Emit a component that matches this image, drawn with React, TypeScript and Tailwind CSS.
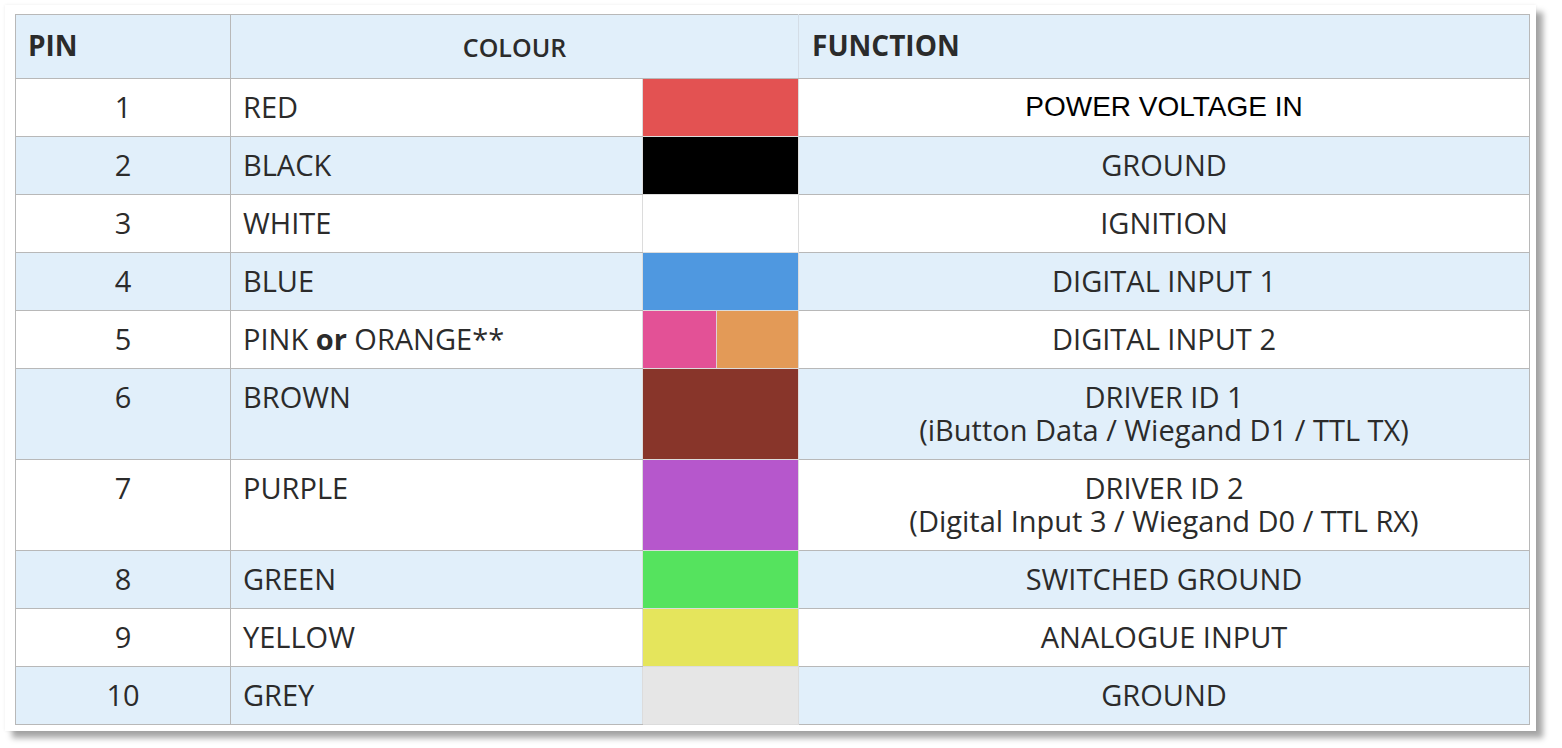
type Row = {
  pin: string;
  name: React.ReactNode;
  swatch: string[];
  fn: React.ReactNode;
  tall?: boolean;
  plain?: boolean;
};

const rows: Row[] = [
  { pin: '1', name: 'RED', swatch: ['#e35252'], fn: 'POWER VOLTAGE IN', plain: true },
  { pin: '2', name: 'BLACK', swatch: ['#000000'], fn: 'GROUND' },
  { pin: '3', name: 'WHITE', swatch: ['#ffffff'], fn: 'IGNITION' },
  { pin: '4', name: 'BLUE', swatch: ['#4f98e0'], fn: 'DIGITAL INPUT 1' },
  {
    pin: '5',
    name: (
      <>
        PINK <b className="font-bold">or</b> ORANGE**
      </>
    ),
    swatch: ['#e35196', '#e39a57'],
    fn: 'DIGITAL INPUT 2',
  },
  {
    pin: '6',
    name: 'BROWN',
    swatch: ['#88352a'],
    fn: (
      <>
        <div>DRIVER ID 1</div>
        <div>(iButton Data / Wiegand D1 / TTL TX)</div>
      </>
    ),
    tall: true,
  },
  {
    pin: '7',
    name: 'PURPLE',
    swatch: ['#b657cc'],
    fn: (
      <>
        <div>DRIVER ID 2</div>
        <div>(Digital Input 3 / Wiegand D0 / TTL RX)</div>
      </>
    ),
    tall: true,
  },
  { pin: '8', name: 'GREEN', swatch: ['#55e35e'], fn: 'SWITCHED GROUND' },
  { pin: '9', name: 'YELLOW', swatch: ['#e5e55c'], fn: 'ANALOGUE INPUT' },
  { pin: '10', name: 'GREY', swatch: ['#e6e6e6'], fn: 'GROUND' },
];

export default function App() {
  return (
    <div className="w-[1562px] h-[748px] bg-white pl-[5px] pt-[5px]">
      <div className="w-[1531px] bg-white pl-[10px] pt-[9px] pr-[7px] pb-[6px] shadow-[0_0_3px_rgba(0,0,0,0.08),7px_7px_6px_rgba(0,0,0,0.35)]">
        <table
          className="table-fixed border-collapse w-[1514px] text-[#2b2b2b] text-[29px] leading-[33px]"
          style={{ fontFamily: '"Open Sans", "Liberation Sans", sans-serif' }}
        >
          <colgroup>
            <col className="w-[215px]" />
            <col className="w-[412px]" />
            <col className="w-[156px]" />
            <col className="w-[731px]" />
          </colgroup>
          <thead>
            <tr className="h-[64px] bg-[#e1effa]">
              <th className="border border-[#b8b8b8] text-left pl-[12px] font-bold text-[28px] align-middle pb-[3px]">PIN</th>
              <th colSpan={2} className="border border-[#b8b8b8] border-r-[#d4dde6] text-center font-semibold text-[25px] align-middle pt-[2px]">
                COLOUR
              </th>
              <th className="border border-[#b8b8b8] border-l-[#d4dde6] text-left pl-[13px] font-bold text-[28px] align-middle pb-[3px]">FUNCTION</th>
            </tr>
          </thead>
          <tbody>
            {rows.map((r, i) => (
              <tr key={r.pin} className={`${r.tall ? 'h-[91px]' : 'h-[58px]'} ${i % 2 === 1 ? 'bg-[#e1effa]' : 'bg-white'}`}>
                <td className="border border-[#b8b8b8] text-center align-top pt-[11px] pb-[13px]">{r.pin}</td>
                <td className="border border-[#b8b8b8] border-r-[#dcdcdc] pl-[12px] align-top pt-[11px] pb-[13px] whitespace-nowrap">{r.name}</td>
                <td className="border border-[#dcdcdc] p-0 align-top">
                  <div className={`flex w-full ${r.tall ? 'h-[90px]' : 'h-[57px]'}`}>
                    {r.swatch.map((c, j) => (
                      <div
                        key={c}
                        className={j === 0 && r.swatch.length > 1 ? 'w-[74px] border-r border-[#e0d0d8]' : 'flex-1'}
                        style={{ backgroundColor: c }}
                      />
                    ))}
                  </div>
                </td>
                <td
                  className={`border border-[#b8b8b8] border-l-[#dcdcdc] text-center align-middle pb-[2px] ${r.plain ? 'text-black text-[28px]' : ''}`}
                  style={r.plain ? { fontFamily: '"Liberation Sans", Arial, sans-serif' } : undefined}
                >
                  {r.fn}
                </td>
              </tr>
            ))}
          </tbody>
        </table>
      </div>
    </div>
  );
}
